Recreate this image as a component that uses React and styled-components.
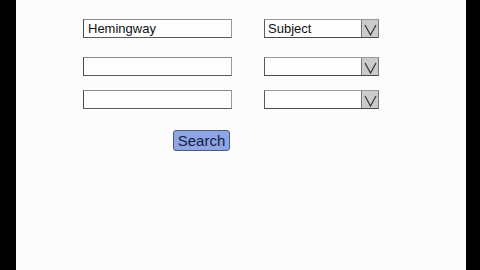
import React from "react";
import styled, { createGlobalStyle } from "styled-components";

const Global = createGlobalStyle`
  html, body { margin: 0; padding: 0; background: #000; }
  body { font-family: "Liberation Sans", Arial, sans-serif; }
`;

const Screen = styled.div`
  width: 480px;
  height: 270px;
  background: #000;
  display: flex;
`;

const Page = styled.div`
  margin-left: 16px;
  width: 450px;
  height: 270px;
  background: #fcfcfc;
  padding: 19px 0 0 67px;
  box-sizing: border-box;
  display: flex;
  flex-direction: column;
`;

const Row = styled.div`
  display: flex;
  align-items: flex-start;
  gap: 32px;
  margin-top: ${(p) => p.$top || 0}px;
`;

const TextBox = styled.div`
  width: 149px;
  height: 19px;
  box-sizing: border-box;
  background: #fdfdfd;
  border-top: 1px solid #8a8a8a;
  border-left: 1px solid #4a4a4a;
  border-right: 1px solid #9a9a9a;
  border-bottom: 1px solid #5a5a5a;
  font-size: 13px;
  line-height: 18px;
  padding-left: 4px;
  color: #111;
`;

const Select = styled.div`
  width: 115px;
  height: 19px;
  box-sizing: border-box;
  display: flex;
  background: #fdfdfd;
  border-top: 1px solid #9a9a9a;
  border-left: 1px solid #5a5a5a;
  border-right: 1px solid #7a7a7a;
  border-bottom: 1px solid #4a4a4a;
`;

const SelectText = styled.div`
  flex: 1;
  font-size: 13px;
  line-height: 17px;
  padding-left: 3px;
  color: #111;
`;

const Arrow = styled.div`
  width: 17px;
  height: 17px;
  box-sizing: border-box;
  background: #cbcbcb;
  border-left: 1px solid #777;
  display: flex;
  align-items: flex-end;
  justify-content: center;
  padding-bottom: 1px;
`;

const ButtonRow = styled.div`
  margin-top: 21px;
  padding-left: 90px;
  display: flex;
`;

const Button = styled.div`
  width: 57px;
  height: 21px;
  box-sizing: border-box;
  background: #8ea6e6;
  border: 1px solid #4d5a7a;
  border-radius: 3px;
  font-size: 15px;
  line-height: 19px;
  text-align: center;
  color: #141c3c;
`;

const Chevron = () => (
  <svg width="13" height="12" viewBox="0 0 13 12">
    <path d="M1 1 L6.5 11 L12 1" fill="none" stroke="#333" strokeWidth="1.2" />
  </svg>
);

const rows = [
  { top: 0, text: "Hemingway", select: "Subject" },
  { top: 19, text: "", select: "" },
  { top: 14, text: "", select: "" },
];

export default function App() {
  return (
    <Screen>
      <Global />
      <Page>
        {rows.map((r, i) => (
          <Row key={i} $top={r.top}>
            <TextBox>{r.text}</TextBox>
            <Select>
              <SelectText>{r.select}</SelectText>
              <Arrow>
                <Chevron />
              </Arrow>
            </Select>
          </Row>
        ))}
        <ButtonRow>
          <Button>Search</Button>
        </ButtonRow>
      </Page>
    </Screen>
  );
}
